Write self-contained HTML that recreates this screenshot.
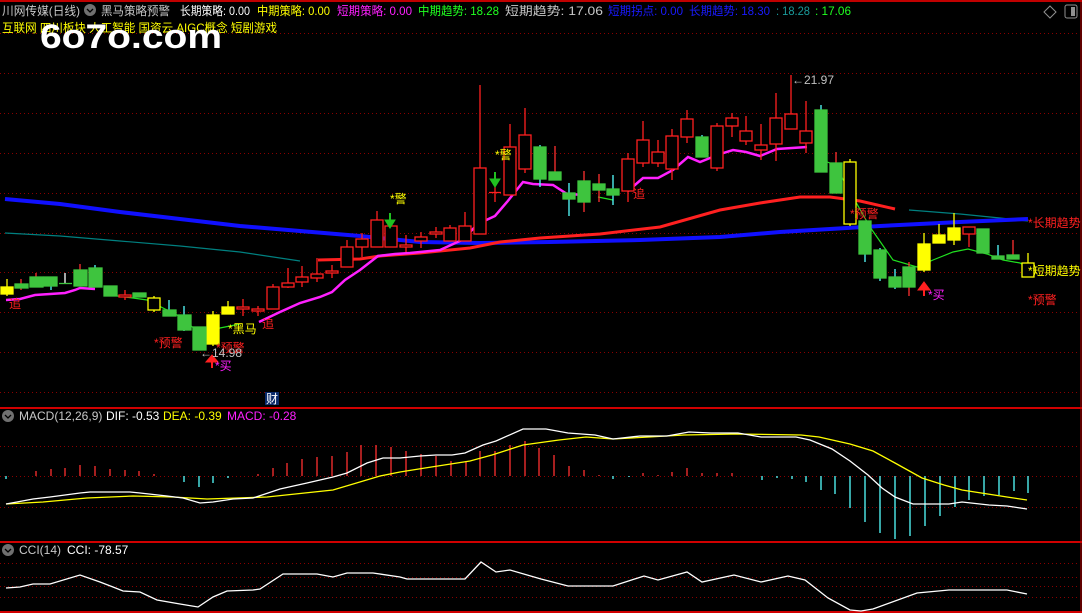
<!DOCTYPE html>
<html><head><meta charset="utf-8"><style>
html,body{margin:0;padding:0;background:#000;width:1082px;height:613px;overflow:hidden}
svg{display:block}
text{font-family:"Liberation Sans","Noto Sans CJK SC",sans-serif;font-size:12px}
</style></head><body>
<svg width="1082" height="613" viewBox="0 0 1082 613" xmlns="http://www.w3.org/2000/svg">
<rect width="1082" height="613" fill="#000"/>
<line x1="0" y1="1" x2="1082" y2="1" stroke="#c00000" stroke-width="2"/>
<line x1="1081" y1="0" x2="1081" y2="613" stroke="#c00000" stroke-width="1"/>
<line x1="0" y1="408" x2="1082" y2="408" stroke="#d00000" stroke-width="2"/>
<line x1="0" y1="542" x2="1082" y2="542" stroke="#d00000" stroke-width="2"/>
<line x1="0" y1="612" x2="1082" y2="612" stroke="#d00000" stroke-width="2"/>
<g stroke="#8a0000" stroke-width="1" stroke-dasharray="1,3">
<line x1="0" y1="33.5" x2="1080" y2="33.5"/><line x1="0" y1="73.5" x2="1080" y2="73.5"/>
<line x1="0" y1="113.5" x2="1080" y2="113.5"/><line x1="0" y1="153.5" x2="1080" y2="153.5"/>
<line x1="0" y1="193.5" x2="1080" y2="193.5"/><line x1="0" y1="233.5" x2="1080" y2="233.5"/>
<line x1="0" y1="272.5" x2="1080" y2="272.5"/><line x1="0" y1="312.5" x2="1080" y2="312.5"/>
<line x1="0" y1="352.5" x2="1080" y2="352.5"/><line x1="0" y1="392.5" x2="1080" y2="392.5"/>
<line x1="0" y1="446.5" x2="1080" y2="446.5"/><line x1="0" y1="476.5" x2="1080" y2="476.5"/>
<line x1="0" y1="507.5" x2="1080" y2="507.5"/>
<line x1="0" y1="563.5" x2="1080" y2="563.5"/><line x1="0" y1="577.5" x2="1080" y2="577.5"/>
<line x1="0" y1="586.5" x2="1080" y2="586.5"/><line x1="0" y1="597.5" x2="1080" y2="597.5"/>
</g>
<polyline fill="none" stroke="#008080" stroke-width="1.2" points="5,233 60,236 120,241 180,246 240,252 300,261"/>
<polyline fill="none" stroke="#008080" stroke-width="1.2" points="909,210 960,214 1000,218 1028,221"/>
<polyline fill="none" stroke="#1010ff" stroke-width="4" points="5,199 60,204 120,212 180,219 240,226 300,231 360,236 420,242 480,243 550,242 640,240 720,237 780,232 880,226 960,222 1028,219"/>
<polyline fill="none" stroke="#ff2020" stroke-width="3" points="318,260 360,259 380,256 420,253 470,248 500,242 540,238 600,234 660,227 720,210 760,203 800,197 830,197 860,201 895,209"/>
<polyline fill="none" stroke="#ff20ff" stroke-width="2.5" points="6,300 20,299 35,295 50,294 65,293 75,290 80,288 95,289"/>
<polyline fill="none" stroke="#ff20ff" stroke-width="2.5" points="259,322 280,312 300,303 320,297 332,292 345,280 360,270 378,256 395,254 410,253 440,250 462,240 475,227 482,222 495,216 507,202 523,182 533,184 553,185 567,194 585,195"/>
<polyline fill="none" stroke="#ff20ff" stroke-width="2.5" points="628,191 643,178 658,178 673,170 688,157 700,162 720,154 733,150 746,152 760,156 777,149 807,147"/>
<polyline fill="none" stroke="#20e020" stroke-width="1.2" points="110,295 133,298 147,300 177,315 200,333 220,328 240,324"/>
<polyline fill="none" stroke="#20e020" stroke-width="1.2" points="598,197 613,200"/>
<polyline fill="none" stroke="#20e020" stroke-width="1.2" points="822,160 835,165 853,197 870,227 893,260 917,267 933,260 953,252 968,249 987,254 1003,260 1020,263 1030,269"/>
<g stroke-width="1.3">
<g fill="#ffff00" stroke="#ffff00">
<line x1="7" y1="279" x2="7" y2="296"/><rect x="1" y="287" width="12" height="7"/>
<line x1="213" y1="311" x2="213" y2="346"/><rect x="207" y="315" width="12" height="29"/>
<line x1="228" y1="301" x2="228" y2="314"/><rect x="222" y="307" width="12" height="7"/>
<line x1="924" y1="233" x2="924" y2="272"/><rect x="918" y="244" width="12" height="26"/>
<line x1="939" y1="224" x2="939" y2="243"/><rect x="933" y="235" width="12" height="8"/>
<line x1="954" y1="213" x2="954" y2="245"/><rect x="948" y="228" width="12" height="12"/>
</g>
<g fill="#000" stroke="#ffff00">
<line x1="154" y1="296" x2="154" y2="312"/><rect x="148" y="298" width="12" height="12"/>
<line x1="850" y1="159" x2="850" y2="226"/><rect x="844" y="162" width="12" height="62"/>
<line x1="1028" y1="253" x2="1028" y2="263"/><rect x="1022" y="263" width="12" height="14"/>
</g>
<g fill="#3ec43e" stroke="#3ec43e">
<line x1="21" y1="279" x2="21" y2="290" stroke="#ff3030"/><rect x="15" y="284" width="13" height="4"/>
<line x1="36" y1="273" x2="36" y2="287" stroke="#ff3030"/><rect x="30" y="277" width="13" height="10"/>
<line x1="51" y1="277" x2="51" y2="290" stroke="#55ffff"/><rect x="44" y="277" width="13" height="9"/>
<line x1="80" y1="264" x2="80" y2="286" stroke="#ff3030"/><rect x="74" y="270" width="13" height="16"/>
<line x1="95" y1="265" x2="95" y2="287" stroke="#55ffff"/><rect x="89" y="268" width="13" height="19"/>
<rect x="104" y="286" width="13" height="10"/>
<rect x="133" y="293" width="13" height="4"/>
<line x1="169" y1="300" x2="169" y2="316" stroke="#55ffff"/><rect x="163" y="310" width="13" height="6"/>
<line x1="184" y1="306" x2="184" y2="331" stroke="#55ffff"/><rect x="178" y="315" width="13" height="15"/>
<rect x="193" y="327" width="13" height="23"/>
<line x1="540" y1="145" x2="540" y2="187" stroke="#55ffff"/><rect x="534" y="147" width="12" height="32"/>
<line x1="555" y1="146" x2="555" y2="180" stroke="#ff3030"/><rect x="549" y="172" width="12" height="8"/>
<line x1="569" y1="183" x2="569" y2="216" stroke="#55ffff"/><rect x="563" y="193" width="12" height="6"/>
<line x1="584" y1="171" x2="584" y2="212" stroke="#ff3030"/><rect x="578" y="181" width="12" height="21"/>
<line x1="599" y1="174" x2="599" y2="202" stroke="#ff3030"/><rect x="593" y="184" width="12" height="6"/>
<line x1="613" y1="175" x2="613" y2="205" stroke="#55ffff"/><rect x="607" y="189" width="12" height="6"/>
<line x1="702" y1="135" x2="702" y2="157" stroke="#55ffff"/><rect x="696" y="137" width="12" height="20"/>
<line x1="821" y1="105" x2="821" y2="172" stroke="#55ffff"/><rect x="815" y="110" width="12" height="62"/>
<line x1="836" y1="152" x2="836" y2="193" stroke="#ff3030"/><rect x="830" y="163" width="12" height="30"/>
<line x1="865" y1="221" x2="865" y2="262" stroke="#55ffff"/><rect x="859" y="221" width="12" height="33"/>
<line x1="880" y1="248" x2="880" y2="281" stroke="#55ffff"/><rect x="874" y="250" width="12" height="28"/>
<line x1="895" y1="269" x2="895" y2="289" stroke="#55ffff"/><rect x="889" y="277" width="12" height="10"/>
<line x1="909" y1="262" x2="909" y2="296" stroke="#ff3030"/><rect x="903" y="267" width="12" height="20"/>
<rect x="977" y="229" width="12" height="24"/>
<line x1="998" y1="245" x2="998" y2="259" stroke="#55ffff"/><rect x="992" y="256" width="12" height="3"/>
<line x1="1013" y1="240" x2="1013" y2="259" stroke="#ff3030"/><rect x="1007" y="255" width="12" height="4"/>
</g>
<line x1="65" y1="273" x2="65" y2="284" stroke="#ffffff"/><line x1="59" y1="283.5" x2="72" y2="283.5" stroke="#3ec43e"/>
<g fill="#000" stroke="#ff2020">
<line x1="125" y1="290" x2="125" y2="300"/><rect x="119" y="295" width="12" height="2"/>
<line x1="243" y1="299" x2="243" y2="316"/><rect x="237" y="307" width="12" height="2"/>
<line x1="258" y1="306" x2="258" y2="316"/><rect x="252" y="309" width="12" height="2"/>
<line x1="273" y1="284" x2="273" y2="309"/><rect x="267" y="287" width="12" height="22"/>
<line x1="288" y1="268" x2="288" y2="288"/><rect x="282" y="283" width="12" height="4"/>
<line x1="302" y1="266" x2="302" y2="287"/><rect x="296" y="277" width="12" height="5"/>
<line x1="317" y1="258" x2="317" y2="282"/><rect x="311" y="274" width="12" height="4"/>
<line x1="332" y1="265" x2="332" y2="278"/><rect x="326" y="271" width="12" height="2"/>
<line x1="347" y1="240" x2="347" y2="267"/><rect x="341" y="247" width="12" height="20"/>
<line x1="362" y1="233" x2="362" y2="257"/><rect x="356" y="239" width="12" height="8"/>
<line x1="377" y1="211" x2="377" y2="247"/><rect x="371" y="220" width="12" height="27"/>
<line x1="391" y1="220" x2="391" y2="247"/><rect x="385" y="226" width="12" height="21"/>
<line x1="406" y1="235" x2="406" y2="252"/><rect x="400" y="245" width="12" height="2"/>
<line x1="421" y1="232" x2="421" y2="248"/><rect x="415" y="237" width="12" height="4"/>
<line x1="436" y1="227" x2="436" y2="238"/><rect x="430" y="232" width="12" height="2"/>
<line x1="450" y1="225" x2="450" y2="241"/><rect x="444" y="228" width="12" height="13"/>
<line x1="465" y1="212" x2="465" y2="241"/><rect x="459" y="226" width="12" height="15"/>
<line x1="480" y1="85" x2="480" y2="234"/><rect x="474" y="168" width="12" height="66"/>
<line x1="495" y1="187" x2="495" y2="202"/><line x1="489" y1="192.5" x2="501" y2="192.5"/>
<line x1="510" y1="124" x2="510" y2="195"/><rect x="504" y="147" width="12" height="48"/>
<line x1="525" y1="108" x2="525" y2="173"/><rect x="519" y="135" width="12" height="34"/>
<line x1="628" y1="153" x2="628" y2="202"/><rect x="622" y="159" width="12" height="32"/>
<line x1="643" y1="121" x2="643" y2="167"/><rect x="637" y="140" width="12" height="23"/>
<line x1="658" y1="140" x2="658" y2="167"/><rect x="652" y="152" width="12" height="11"/>
<line x1="672" y1="129" x2="672" y2="180"/><rect x="666" y="136" width="12" height="33"/>
<line x1="687" y1="110" x2="687" y2="143"/><rect x="681" y="119" width="12" height="18"/>
<line x1="717" y1="123" x2="717" y2="171"/><rect x="711" y="126" width="12" height="42"/>
<line x1="732" y1="113" x2="732" y2="137"/><rect x="726" y="118" width="12" height="8"/>
<line x1="746" y1="116" x2="746" y2="145"/><rect x="740" y="131" width="12" height="10"/>
<line x1="761" y1="124" x2="761" y2="160"/><rect x="755" y="145" width="12" height="5"/>
<line x1="776" y1="93" x2="776" y2="161"/><rect x="770" y="118" width="12" height="26"/>
<line x1="791" y1="75" x2="791" y2="129"/><rect x="785" y="114" width="12" height="15"/>
<line x1="806" y1="101" x2="806" y2="153"/><rect x="800" y="131" width="12" height="12"/>
<line x1="969" y1="227" x2="969" y2="247"/><rect x="963" y="227" width="12" height="7"/>
</g>
</g>
<g fill="#20c020" stroke="#20c020">
<line x1="390" y1="213" x2="390" y2="222" stroke-width="2"/><polygon points="385,220 395,220 390,228"/>
<line x1="495" y1="172" x2="495" y2="180" stroke-width="2"/><polygon points="490,179 500,179 495,187"/>
</g>
<g fill="#ff2020" stroke="#ff2020">
<polygon points="206,362 212,355 218,362"/><line x1="212" y1="360" x2="212" y2="368" stroke-width="2"/>
<polygon points="918,290 924,282 930,290"/><line x1="924" y1="288" x2="924" y2="296" stroke-width="2"/>
</g>
<g font-size="12">
<text x="390" y="203" fill="#ffff00">*警</text>
<text x="495" y="159" fill="#ffff00">*警</text>
<text x="9" y="308" fill="#ff2020">追</text>
<text x="262" y="328" fill="#ff2020">追</text>
<text x="633" y="198" fill="#ff2020">追</text>
<text x="154" y="347" fill="#ff2020">*预警</text>
<text x="216" y="352" fill="#ff2020">*预警</text>
<text x="228" y="333" fill="#ffff00">*黑马</text>
<text x="200" y="357" fill="#c0c0c0">←14.98</text>
<text x="215" y="370" fill="#ff20ff">*买</text>
<text x="928" y="299" fill="#ff20ff">*买</text>
<text x="792" y="84" fill="#c0c0c0">←21.97</text>
<text x="850" y="218" fill="#ff2020">*预警</text>
<text x="1028" y="227" fill="#ff2020">*长期趋势</text>
<text x="1028" y="275" fill="#ffff00">*短期趋势</text>
<text x="1028" y="304" fill="#ff2020">*预警</text>
</g>
<rect x="265" y="392" width="14" height="13" fill="#0a2a6a"/>
<text x="266" y="403" fill="#ffffff">财</text>
<text x="2" y="15" fill="#c8c8c8" textLength="78" lengthAdjust="spacingAndGlyphs">川网传媒(日线)</text>
<circle cx="90" cy="10" r="6" fill="#707070"/><path d="M87 9 L90 12 L93 9" stroke="#000" fill="none" stroke-width="1.3"/>
<text x="101" y="15" fill="#c8c8c8" textLength="69" lengthAdjust="spacingAndGlyphs">黑马策略预警</text>
<text x="180" y="15" fill="#ffffff" textLength="70" lengthAdjust="spacingAndGlyphs">长期策略: 0.00</text>
<text x="257" y="15" fill="#ffff00" textLength="73" lengthAdjust="spacingAndGlyphs">中期策略: 0.00</text>
<text x="337" y="15" fill="#ff20ff" textLength="75" lengthAdjust="spacingAndGlyphs">短期策略: 0.00</text>
<text x="418" y="15" fill="#20ff20" textLength="81" lengthAdjust="spacingAndGlyphs">中期趋势: 18.28</text>
<text x="505" y="15" fill="#c8c8c8" textLength="98" lengthAdjust="spacingAndGlyphs">短期趋势: 17.06</text>
<text x="608" y="15" fill="#1a1aff" textLength="75" lengthAdjust="spacingAndGlyphs">短期拐点: 0.00</text>
<text x="689" y="15" fill="#1a1aff" textLength="81" lengthAdjust="spacingAndGlyphs">长期趋势: 18.30</text>
<text x="776" y="15" fill="#1a9a9a" textLength="34" lengthAdjust="spacingAndGlyphs">: 18.28</text>
<text x="815" y="15" fill="#20ff20" textLength="36" lengthAdjust="spacingAndGlyphs">: 17.06</text>
<path d="M1050 6 L1056 12 L1050 18 L1044 12 Z" fill="none" stroke="#909090"/>
<rect x="1065" y="5" width="12" height="13" rx="2" fill="none" stroke="#909090"/><rect x="1071" y="7" width="4" height="9" fill="#909090"/>
<text x="2" y="32" fill="#ffff00" textLength="275" lengthAdjust="spacingAndGlyphs">互联网 四川板块 人工智能 国资云 AIGC概念 短剧游戏</text>
<text x="40" y="48" fill="#ffffff" font-weight="bold" style="font-size:34px" textLength="182" lengthAdjust="spacingAndGlyphs">6o7o.com</text>
<circle cx="8" cy="416" r="6" fill="#707070"/><path d="M5 415 L8 418 L11 415" stroke="#000" fill="none" stroke-width="1.3"/>
<text x="19" y="420" fill="#c8c8c8">MACD(12,26,9)</text>
<text x="106" y="420" fill="#ffffff">DIF: -0.53</text>
<text x="163" y="420" fill="#ffff00">DEA: -0.39</text>
<text x="227" y="420" fill="#ff20ff">MACD: -0.28</text>
<g stroke-width="1.3">
<path stroke="#ff3030" d="M36 476v-5M51 476v-7M65 476v-8M80 476v-11M95 476v-10M110 476v-7M125 476v-6M139 476v-5M154 476v-2M258 476v-2M273 476v-8M287 476v-13M302 476v-17M317 476v-19M332 476v-20M347 476v-24M361 476v-31M376 476v-31M391 476v-29M406 476v-25M421 476v-22M436 476v-20M451 476v-15M466 476v-15M480 476v-25M495 476v-25M510 476v-31M525 476v-35M539 476v-28M554 476v-21M569 476v-10M584 476v-6M599 476v-1M643 476v-3M658 476v-1M672 476v-4M687 476v-8M702 476v-3M717 476v-3M732 476v-3"/>
<path stroke="#55ffff" d="M6 476v3M184 476v6M199 476v11M213 476v7M228 476v2M613 476v3M629 476v1M762 476v4M777 476v2M792 476v3M806 476v6M821 476v14M835 476v18M850 476v32M865 476v46M880 476v57M895 476v63M910 476v60M925 476v50M940 476v40M955 476v31M969 476v24M984 476v20M999 476v19M1014 476v15M1028 476v17"/>
</g>
<polyline fill="none" stroke="#ffff00" stroke-width="1.3" points="6,504 43,502 87,498 133,496 173,497 207,499 267,497 333,490 380,476 400,472 425,468 470,461 492,455 523,445 559,440 586,437 613,439 649,437 684,435 738,434 801,435 819,437 850,444 873,451 895,463 922,478 944,485 962,490 1007,497 1027,500"/>
<polyline fill="none" stroke="#ffffff" stroke-width="1.3" points="6,504 17,502 33,499 50,497 80,493 90,492 130,492 140,493 167,496 183,498 200,503 213,502 233,499 253,498 280,489 307,483 333,477 347,473 367,463 383,458 400,458 420,456 436,455 452,455 465,453 483,445 496,441 523,429 546,429 568,433 595,435 613,439 640,436 667,436 689,432 711,433 738,433 761,437 796,437 810,440 832,449 850,461 868,475 882,488 895,497 913,504 949,504 962,502 989,505 1007,506 1027,509"/>
<circle cx="8" cy="550" r="6" fill="#707070"/><path d="M5 549 L8 552 L11 549" stroke="#000" fill="none" stroke-width="1.3"/>
<text x="19" y="554" fill="#c8c8c8">CCI(14)</text>
<text x="67" y="554" fill="#ffffff">CCI: -78.57</text>
<polyline fill="none" stroke="#ffffff" stroke-width="1.3" points="6,588 20,587 33,584 50,584 80,575 100,582 113,587 123,591 140,592 157,600 180,604 198,607 213,597 227,591 253,590 260,589 283,574 317,574 333,577 347,573 373,573 400,577 407,579 443,579 465,579 481,562 496,572 510,570 541,579 568,586 613,586 644,576 658,580 687,572 702,582 734,575 761,582 788,576 805,580 828,598 850,610 861,611 873,609 917,593 949,590 1007,590 1027,594"/>
</svg>
</body></html>
